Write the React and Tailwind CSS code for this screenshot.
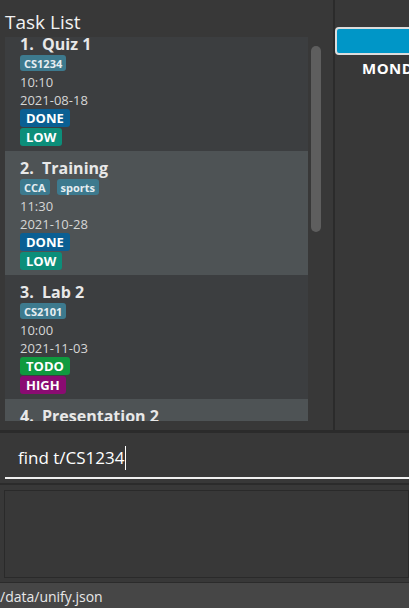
import React from "react";

const F = { fontFamily: '"Open Sans", "Noto Sans", sans-serif' };

function Tag({ children }) {
  return (
    <span className="inline-flex h-[16px] items-center rounded-[3px] bg-[#3d7a8e] px-[4px] text-[11px] font-bold leading-none text-[#e6eef2]">
      {children}
    </span>
  );
}

function Badge({ children, color }) {
  return (
    <div className="flex">
      <span className={`inline-flex h-[18px] items-center rounded-[3px] px-[6px] text-[13px] font-bold leading-none text-white ${color}`}>
        {children}
      </span>
    </div>
  );
}

function Item({ idx, title, tags, time, date, status, statusColor, prio, prioColor, light }) {
  return (
    <div className={`h-[124px] shrink-0 overflow-hidden pl-[15px] pt-[7px] ${light ? "bg-[#4e5355]" : "bg-[#3c3e40]"}`}>
      <div className="h-[20px] whitespace-pre text-[16px] font-bold leading-[20px] text-[#e8e8e8]">
        {idx}.  {title}
      </div>
      <div className="mt-[1px] flex h-[16px] gap-[7px]">
        {tags.map((t) => (
          <Tag key={t}>{t}</Tag>
        ))}
      </div>
      <div className="mt-[2px] text-[13px] leading-[18px] text-[#d6d6d6]">{time}</div>
      <div className="text-[13px] leading-[18px] text-[#d6d6d6]">{date}</div>
      <Badge color={statusColor}>{status}</Badge>
      <div className="mt-[1px]">
        <Badge color={prioColor}>{prio}</Badge>
      </div>
    </div>
  );
}

export default function App() {
  return (
    <div style={F} className="flex h-[608px] w-[409px] flex-col overflow-hidden bg-[#383838]">
      <div className="flex h-[430px] shrink-0">
        <div className="flex w-[333px] shrink-0 flex-col">
          <div className="h-[37px] shrink-0 pl-[5px] pt-[9px] text-[19px] leading-[26px] text-[#f2f2f2]">
            Task List
          </div>
          <div className="flex pl-[5px]">
            <div className="h-[384px] w-[303px] overflow-hidden bg-[#3c3e40]">
              <div className="-mt-[10px] flex flex-col">
                <Item idx={1} title="Quiz 1" tags={["CS1234"]} time="10:10" date="2021-08-18" status="DONE" statusColor="bg-[#0a5f93]" prio="LOW" prioColor="bg-[#0c8e7a]" />
                <Item light idx={2} title="Training" tags={["CCA", "sports"]} time="11:30" date="2021-10-28" status="DONE" statusColor="bg-[#0a5f93]" prio="LOW" prioColor="bg-[#0c8e7a]" />
                <Item idx={3} title="Lab 2" tags={["CS2101"]} time="10:00" date="2021-11-03" status="TODO" statusColor="bg-[#0f9a3f]" prio="HIGH" prioColor="bg-[#8a0b72]" />
                <Item light idx={4} title="Presentation 2" tags={[]} time="" date="" status="TODO" statusColor="bg-[#0f9a3f]" prio="HIGH" prioColor="bg-[#8a0b72]" />
              </div>
            </div>
            <div className="ml-[3px] mt-[9px] h-[186px] w-[10px] rounded-[5px] bg-[#5e5e5e]" />
          </div>
        </div>
        <div className="w-[2px] shrink-0 bg-[#2b2b2b]" />
        <div className="flex min-w-0 flex-1 flex-col overflow-hidden">
          <div className="mt-[27px] h-[28px] w-[120px] shrink-0 rounded-[4px] border-2 border-[#dcdcdc] bg-[#0096c7]" />
          <div className="ml-[27px] mt-[4px] whitespace-nowrap text-[15px] font-bold leading-[18px] tracking-[0.5px] text-white">
            MONDAY
          </div>
        </div>
      </div>
      <div className="h-[3px] shrink-0 bg-[#2b2b2b]" />
      <div className="flex h-[44px] shrink-0 items-center pl-[18px] pt-[6px] text-[17px] text-white">
        <span>find t/CS1234</span>
        <span className="ml-[1px] h-[24px] w-[1px] bg-white" />
      </div>
      <div className="ml-[5px] h-[2px] shrink-0 bg-[#f0f0f0]" />
      <div className="h-[4px] shrink-0" />
      <div className="h-[2px] shrink-0 bg-[#2b2b2b]" />
      <div className="h-[5px] shrink-0" />
      <div className="ml-[4px] h-[88px] shrink-0 border border-[#2a2a2a] bg-[#383838]" />
      <div className="h-[4px] shrink-0" />
      <div className="h-[1px] shrink-0 bg-[#2b2b2b]" />
      <div className="flex flex-1 items-center bg-[#464646] pt-[3px] text-[14px] leading-none text-[#e8e8e8]">
        /data/unify.json
      </div>
    </div>
  );
}
